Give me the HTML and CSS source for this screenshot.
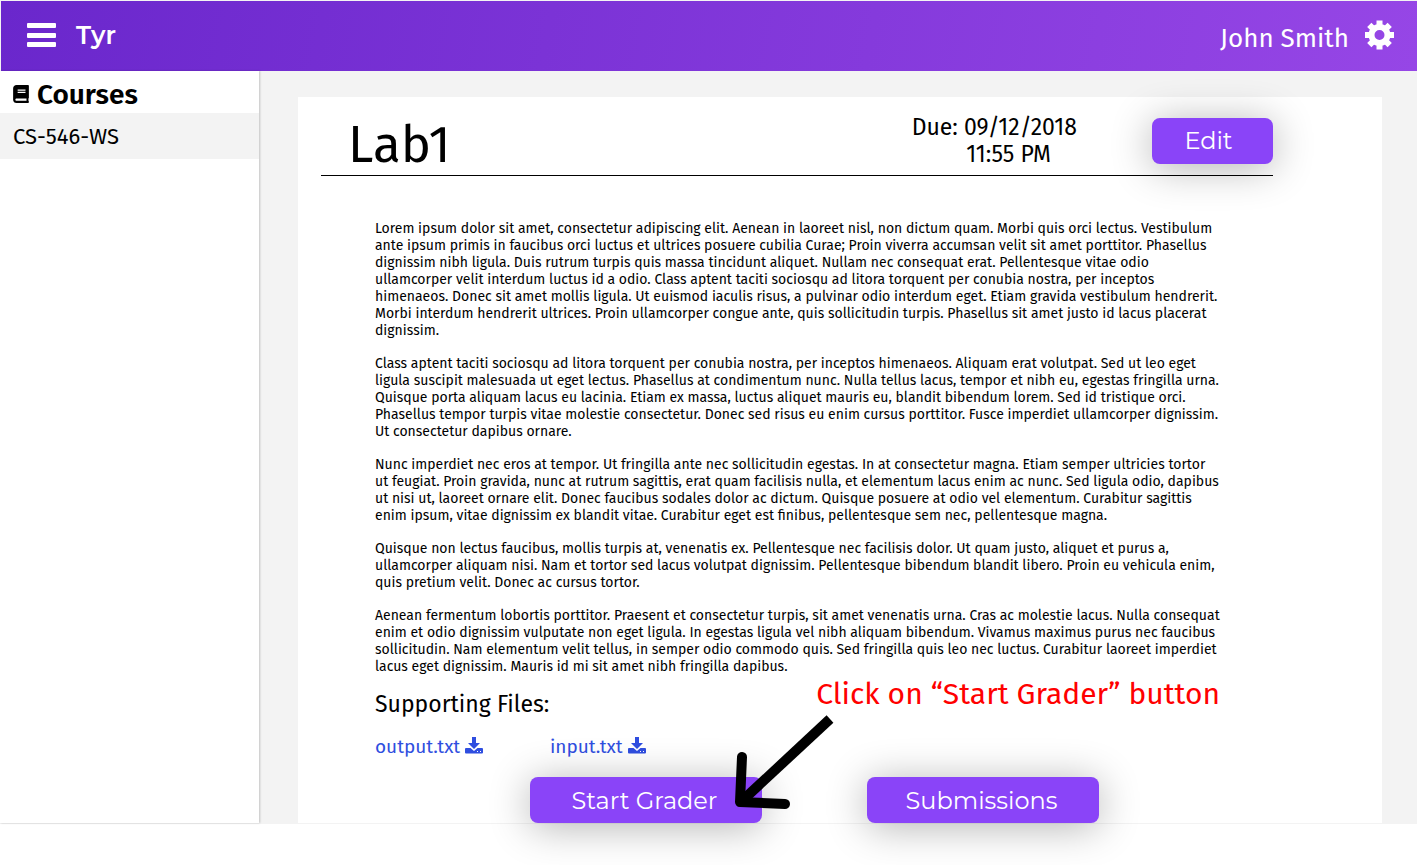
FILE: index.html
```html
<!DOCTYPE html>
<html lang="en">
<head>
<meta charset="utf-8">
<meta name="viewport" content="width=device-width, initial-scale=1">
<title>Tyr</title>
<link rel="stylesheet" href="styles.css">
</head>
<body>
<header class="topbar">
  <button class="icon-button" type="button" aria-label="Menu">
    <svg width="30" height="28" viewBox="0 0 30 28" fill="currentColor"><rect x="1" y="1" width="29" height="5" rx="1"/><rect x="1" y="11" width="29" height="5" rx="1"/><rect x="1" y="20" width="29" height="5" rx="1"/></svg>
  </button>
  <span class="brand">Tyr</span>
  <span class="user">John Smith</span>
  <button class="icon-button" type="button" aria-label="Settings">
    <svg width="30" height="32" viewBox="0 0 30 32" fill="none" stroke="currentColor"><circle cx="14.500" cy="15" r="8" stroke-width="6"/><path stroke-width="6" d="M14.500.5v6M14.500 23.500v6M0 15h6M23 15h6M4.300 4.800l4 4M20.700 21.200l4 4M4.300 25.200l4-4M20.700 8.800l4-4"/></svg>
  </button>
</header>

<div class="layout">
  <nav class="sidebar" aria-label="Courses">
    <h2 class="sidebar-title">
      <svg width="16" height="18" viewBox="0 0 448 512" fill="currentColor"><path d="M448 360V24c0-13.300-10.700-24-24-24H96C43 0 0 43 0 96v320c0 53 43 96 96 96h328c13.300 0 24-10.700 24-24v-16c0-7.500-3.500-14.300-8.900-18.700-4.200-15.400-4.200-59.300 0-74.700 5.400-4.300 8.900-11.100 8.900-18.600zM128 134c0-3.300 2.700-6 6-6h212c3.300 0 6 2.700 6 6v20c0 3.300-2.700 6-6 6H134c-3.300 0-6-2.700-6-6v-20zm0 64c0-3.300 2.700-6 6-6h212c3.300 0 6 2.700 6 6v20c0 3.300-2.700 6-6 6H134c-3.300 0-6-2.700-6-6v-20zm253.400 250H96c-17.700 0-32-14.300-32-32 0-17.600 14.400-32 32-32h285.400c-1.900 17.100-1.900 46.900 0 64z"/></svg>
      Courses
    </h2>
    <a class="course" href="#">CS-546-WS</a>
  </nav>

  <main class="content">
    <article class="panel">
      <div class="lab-header">
        <h1 class="lab-title">Lab1</h1>
        <div class="due"><span>Due: 09/12/2018</span><span class="due-time">11:55 PM</span></div>
        <button class="button button-small" type="button">Edit</button>
      </div>

      <div class="lab-body">
        <p>Lorem ipsum dolor sit amet, consectetur adipiscing elit. Aenean in laoreet nisl, non dictum quam. Morbi quis orci lectus. Vestibulum<br>
        ante ipsum primis in faucibus orci luctus et ultrices posuere cubilia Curae; Proin viverra accumsan velit sit amet porttitor. Phasellus<br>
        dignissim nibh ligula. Duis rutrum turpis quis massa tincidunt aliquet. Nullam nec consequat erat. Pellentesque vitae odio<br>
        ullamcorper velit interdum luctus id a odio. Class aptent taciti sociosqu ad litora torquent per conubia nostra, per inceptos<br>
        himenaeos. Donec sit amet mollis ligula. Ut euismod iaculis risus, a pulvinar odio interdum eget. Etiam gravida vestibulum hendrerit.<br>
        Morbi interdum hendrerit ultrices. Proin ullamcorper congue ante, quis sollicitudin turpis. Phasellus sit amet justo id lacus placerat<br>
        dignissim.</p>
        <p>Class aptent taciti sociosqu ad litora torquent per conubia nostra, per inceptos himenaeos. Aliquam erat volutpat. Sed ut leo eget<br>
        ligula suscipit malesuada ut eget lectus. Phasellus at condimentum nunc. Nulla tellus lacus, tempor et nibh eu, egestas fringilla urna.<br>
        Quisque porta aliquam lacus eu lacinia. Etiam ex massa, luctus aliquet mauris eu, blandit bibendum lorem. Sed id tristique orci.<br>
        Phasellus tempor turpis vitae molestie consectetur. Donec sed risus eu enim cursus porttitor. Fusce imperdiet ullamcorper dignissim.<br>
        Ut consectetur dapibus ornare.</p>
        <p>Nunc imperdiet nec eros at tempor. Ut fringilla ante nec sollicitudin egestas. In at consectetur magna. Etiam semper ultricies tortor<br>
        ut feugiat. Proin gravida, nunc at rutrum sagittis, erat quam facilisis nulla, et elementum lacus enim ac nunc. Sed ligula odio, dapibus<br>
        ut nisi ut, laoreet ornare elit. Donec faucibus sodales dolor ac dictum. Quisque posuere at odio vel elementum. Curabitur sagittis<br>
        enim ipsum, vitae dignissim ex blandit vitae. Curabitur eget est finibus, pellentesque sem nec, pellentesque magna.</p>
        <p>Quisque non lectus faucibus, mollis turpis at, venenatis ex. Pellentesque nec facilisis dolor. Ut quam justo, aliquet et purus a,<br>
        ullamcorper aliquam nisi. Nam et tortor sed lacus volutpat dignissim. Pellentesque bibendum blandit libero. Proin eu vehicula enim,<br>
        quis pretium velit. Donec ac cursus tortor.</p>
        <p>Aenean fermentum lobortis porttitor. Praesent et consectetur turpis, sit amet venenatis urna. Cras ac molestie lacus. Nulla consequat<br>
        enim et odio dignissim vulputate non eget ligula. In egestas ligula vel nibh aliquam bibendum. Vivamus maximus purus nec faucibus<br>
        sollicitudin. Nam elementum velit tellus, in semper odio commodo quis. Sed fringilla quis leo nec luctus. Curabitur laoreet imperdiet<br>
        lacus eget dignissim. Mauris id mi sit amet nibh fringilla dapibus.</p>
      </div>

      <h2 class="files-title">Supporting Files:</h2>
      <div class="files">
        <a class="file" href="#">output.txt <svg class="download" width="18" height="17" viewBox="0 0 18 17" fill="currentColor"><path d="M7 0h4v6h4L9 12 3 6h4z"/><path fill-rule="evenodd" d="M1 11h4.500L9 14l3.500-3H17a1 1 0 0 1 1 1v3.500a1 1 0 0 1-1 1H1a1 1 0 0 1-1-1V12a1 1 0 0 1 1-1zm11 3v1h1v-1zm3 0v1h1v-1z"/></svg></a>
        <a class="file" href="#">input.txt <svg class="download" width="18" height="17" viewBox="0 0 18 17" fill="currentColor"><path d="M7 0h4v6h4L9 12 3 6h4z"/><path fill-rule="evenodd" d="M1 11h4.500L9 14l3.500-3H17a1 1 0 0 1 1 1v3.500a1 1 0 0 1-1 1H1a1 1 0 0 1-1-1V12a1 1 0 0 1 1-1zm11 3v1h1v-1zm3 0v1h1v-1z"/></svg></a>
      </div>
      <div class="actions">
        <button class="button" type="button">Start Grader</button>
        <button class="button" type="button">Submissions</button>
      </div>

      <p class="hint">Click on “Start Grader” button</p>
      <svg class="hint-arrow" width="104" height="100" viewBox="0 0 104 100" fill="none" stroke="#000" stroke-width="10"><path d="M100 8 14 88"/><path d="M12 46 10 91l45 2" stroke-linecap="round" stroke-linejoin="round"/></svg>
    </article>
  </main>
</div>
</body>
</html>
```
FILE: styles.css
```css
* {
  box-sizing: border-box;
}

body {
  min-height: 100vh;
  margin: 0;
  background: #fff;
  color: #000;
  font-family: "Fira Sans", "Noto Sans", sans-serif;
}

h1, h2, p {
  margin: 0;
  font-weight: 400;
}

a {
  color: inherit;
  text-decoration: none;
}

button {
  border: 0;
  cursor: pointer;
}

.topbar {
  display: flex;
  align-items: center;
  height: 71px;
  padding: 0 22px 0 25px;
  border-top: 1px solid #f3f3f3;
  border-left: 1px solid #f3f3f3;
  background: linear-gradient(100deg, #6a27cc, #9646e6) padding-box;
  color: #fff;
}

.icon-button {
  display: flex;
  padding: 0;
  background: none;
  color: inherit;
}

.brand {
  margin: 0 0 2px 20px;
  font: 600 25px/30px Montserrat, Inter, sans-serif;
}

.user {
  margin: 6px 16px 0 auto;
  font-size: 26px;
  line-height: 30px;
}

.layout {
  display: flex;
  border-bottom: 1px solid #f3f3f3;
}

.sidebar {
  position: relative;
  flex: 0 0 259px;
  background: #fff;
  box-shadow: 1px 0 2px rgba(0, 0, 0, 0.2);
}

.sidebar-title {
  display: flex;
  align-items: center;
  gap: 8px;
  height: 42px;
  padding: 4px 13px 0;
  font-size: 28px;
  font-weight: 600;
}

.course {
  display: block;
  padding: 1px 13px 0;
  background: #f3f3f3;
  font-size: 22px;
  line-height: 45px;
}

.content {
  flex: 1;
  padding: 26px 35px 0 39px;
  background: #f3f3f3;
}

.panel {
  position: relative;
  background: #fff;
}

.lab-header {
  display: flex;
  align-items: flex-start;
  margin: 0 109px 0 23px;
  padding: 17px 0 7px 27px;
  border-bottom: 1px solid #000;
}

.lab-title {
  padding-top: 9px;
  font-size: 51px;
  line-height: 45px;
}

.due {
  display: flex;
  flex-direction: column;
  margin-left: auto;
  font-size: 23px;
  line-height: 27px;
}

.due-time {
  align-self: flex-end;
  margin-right: 26px;
}

.button {
  width: 232px;
  height: 46px;
  padding: 2px 3px 0 0;
  border-radius: 8px;
  background: #8a44f8;
  box-shadow: 0 4px 40px rgba(0, 0, 0, 0.3);
  color: #fff;
  font: 400 24px/30px Montserrat, Inter, sans-serif;
}

.button-small {
  width: 121px;
  margin: 4px 0 0 75px;
  padding: 0 8px 0 0;
}

.lab-body {
  display: flex;
  flex-direction: column;
  gap: 16px;
  padding: 44px 77px 0;
  font-size: 14px;
  line-height: 17px;
  white-space: nowrap;
}

.files-title {
  padding: 14px 77px 0;
  font-size: 23px;
  line-height: 30px;
}

.files {
  display: flex;
  padding: 15px 77px 0;
  color: #2f4ee0;
  font-size: 19px;
  line-height: 26px;
}

.file {
  width: 175px;
}

.download {
  vertical-align: -1px;
}

.actions {
  display: flex;
  gap: 105px;
  padding: 17px 232px 0;
}

.hint {
  position: absolute;
  right: 162px;
  bottom: 111px;
  color: #f00;
  font-size: 30px;
  line-height: 36px;
  white-space: nowrap;
}

.hint-arrow {
  position: absolute;
  left: 432px;
  bottom: 12px;
}
```
